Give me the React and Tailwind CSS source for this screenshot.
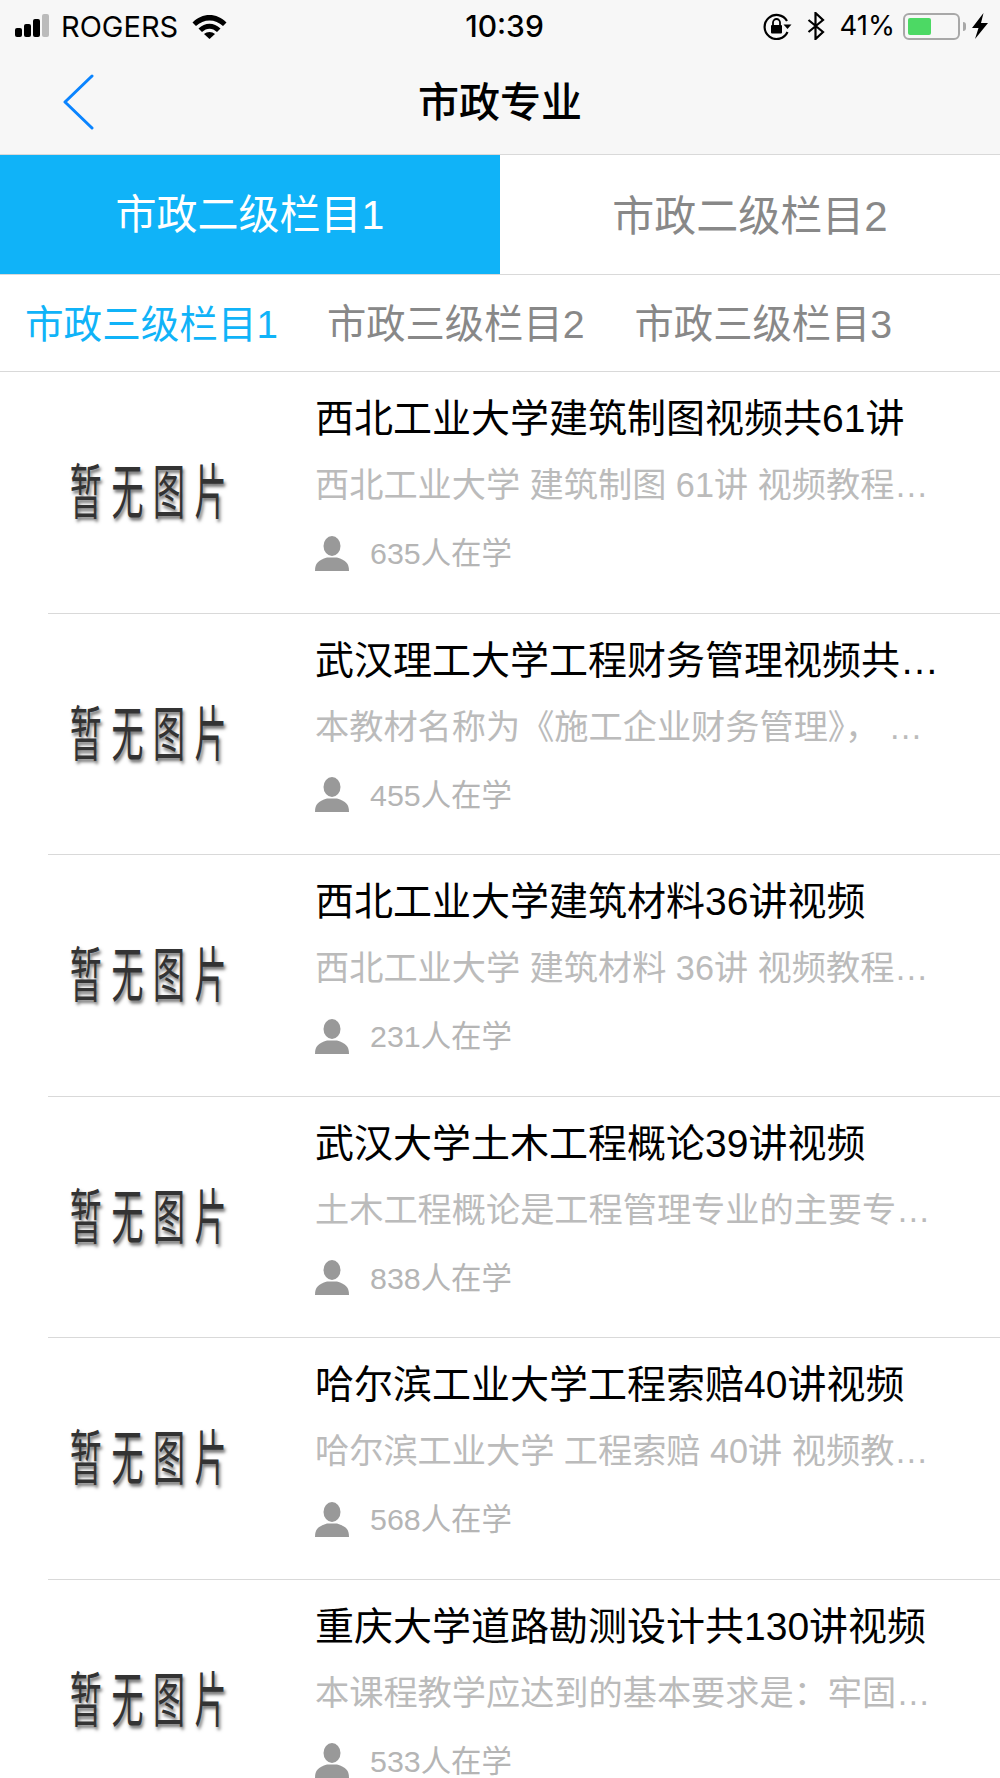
import React from 'react';

const courses = [
  { title: '西北工业大学建筑制图视频共61讲', desc: '西北工业大学 建筑制图 61讲 视频教程…', count: 635 },
  { title: '武汉理工大学工程财务管理视频共…', desc: '本教材名称为《施工企业财务管理》， …', count: 455 },
  { title: '西北工业大学建筑材料36讲视频', desc: '西北工业大学 建筑材料 36讲 视频教程…', count: 231 },
  { title: '武汉大学土木工程概论39讲视频', desc: '土木工程概论是工程管理专业的主要专…', count: 838 },
  { title: '哈尔滨工业大学工程索赔40讲视频', desc: '哈尔滨工业大学 工程索赔 40讲 视频教…', count: 568 },
  { title: '重庆大学道路勘测设计共130讲视频', desc: '本课程教学应达到的基本要求是：牢固…', count: 533 },
];

const StatusBar = () => (
  <div className="h-[52px] flex items-center justify-between pl-[15px] pr-[12px] font-['Inter','Liberation_Sans',sans-serif] text-black">
    <div className="flex items-center w-[306px]">
      <div className="flex items-end gap-[2px] h-[23px] mt-[-1px]">
        <div className="w-[7px] h-[9px] rounded-[2px] bg-black" />
        <div className="w-[7px] h-[13px] rounded-[2px] bg-black" />
        <div className="w-[7px] h-[18px] rounded-[2px] bg-black" />
        <div className="w-[7px] h-[23px] rounded-[2px] bg-[#bbbbbb]" />
      </div>
      <span className="ml-[12px] text-[29px] leading-none">ROGERS</span>
      <svg className="ml-[14px]" width="35" height="25" viewBox="0 0 35 25">
        <path d="M0.5 8.5 C10 -1.5 25 -1.5 34.5 8.5 L31 12 C23.5 4.5 11.5 4.5 4 12 Z" fill="#000" />
        <path d="M6.5 14.5 C13 8 22 8 28.5 14.5 L25 18 C20.5 13.5 14.5 13.5 10 18 Z" fill="#000" />
        <path d="M12 20 C15 17.2 20 17.2 23 20 L17.5 25 Z" fill="#000" />
      </svg>
    </div>
    <div className="text-[30px] font-medium leading-none">10:39</div>
    <div className="flex items-center justify-end w-[300px]">
      <svg width="29" height="27" viewBox="0 0 29 27" fill="none">
        <path d="M24 8 A12 12 0 1 0 24.5 19" stroke="#000" strokeWidth="2.2" />
        <path d="M20.5 11.5 L28.5 11.5 L24.5 16 Z" fill="#000" />
        <rect x="8" y="12" width="11" height="8.5" rx="1" fill="#000" />
        <path d="M10 12 V9.5 A3.5 3.5 0 0 1 17 9.5 V12" stroke="#000" strokeWidth="1.8" />
      </svg>
      <svg className="ml-[14px]" width="20" height="28" viewBox="0 0 18 28" fill="none">
        <path d="M1.5 8 L16 20 L8.5 27 V1 L16 8 L1.5 20" stroke="#000" strokeWidth="2.2" />
      </svg>
      <span className="ml-[14px] text-[27.5px] leading-none">41%</span>
      <div className="ml-[8px] w-[57px] h-[27px] rounded-[6px] border-2 border-[#a8a8a8] p-[3px]">
        <div className="w-[23px] h-full rounded-[2px] bg-[#4cd964]" />
      </div>
      <div className="ml-[3px] w-[3px] h-[9px] rounded-r-[3px] bg-[#a8a8a8]" />
      <svg className="ml-[6px]" width="16" height="26" viewBox="0 0 16 26">
        <path d="M11.5 0 L0 15 H6.5 L3 26 L16 10 H9 Z" fill="#000" />
      </svg>
    </div>
  </div>
);

const NoImage = () => (
  <div className="w-[296px] shrink-0 flex items-center justify-center pl-[10px] pb-[8px]">
    <span className="inline-block scale-x-[0.8] scale-y-[1.5] whitespace-nowrap text-[40px] leading-none font-normal tracking-[12px] text-[#333333] font-['Noto_Sans_CJK_SC',sans-serif] [text-shadow:2px_2px_3px_rgba(0,0,0,0.55)]">
      暂无图片
    </span>
  </div>
);

const UserIcon = () => (
  <svg width="34" height="35" viewBox="0 0 34 35">
    <ellipse cx="17" cy="10" rx="8.5" ry="10" fill="#999999" />
    <path d="M0 35 C0 27 3 24.5 12 21.5 H22 C31 24.5 34 27 34 35 Z" fill="#999999" />
  </svg>
);

const CourseRow = ({ course }) => (
  <div className="h-[241.5px] shrink-0 ml-[48px] flex border-b border-[#d9d9d9]">
    <div className="ml-[-48px] flex">
      <NoImage />
    </div>
    <div className="w-[640px] ml-[19px] pt-[23px]">
      <div className="whitespace-nowrap text-[39px] leading-[48px] text-black">{course.title}</div>
      <div className="mt-[22px] whitespace-nowrap text-[34.2px] leading-[40px] text-[#bbbbbb]">{course.desc}</div>
      <div className="mt-[30px] flex items-center">
        <UserIcon />
        <span className="ml-[21px] text-[30.4px] leading-[36px] text-[#b5b5b5]">{course.count}人在学</span>
      </div>
    </div>
  </div>
);

const App = () => {
  return (
    <div className="w-[1000px] h-[1778px] overflow-hidden bg-white font-['Liberation_Sans','Noto_Sans_CJK_SC',sans-serif]">
      <div className="h-[155px] bg-[#f7f7f7] border-b border-[#d9d9d9]">
        <StatusBar />
        <div className="relative h-[102px] flex items-center justify-center">
          <svg className="absolute left-[62px] top-[22px]" width="34" height="56" viewBox="0 0 34 56" fill="none">
            <path d="M30 2 L3 28 L30 54" stroke="#0a84ff" strokeWidth="3" strokeLinecap="round" strokeLinejoin="round" />
          </svg>
          <h1 className="text-[41px] font-medium leading-none text-black">市政专业</h1>
        </div>
      </div>

      <div className="flex h-[120px] border-b border-[#d9d9d9]">
        <div className="w-1/2 flex items-center justify-center pt-[3px] bg-[#10b3f8] text-[41px] text-white">市政二级栏目1</div>
        <div className="w-1/2 flex items-center justify-center pt-[3px] text-[42px] text-[#888888]">市政二级栏目2</div>
      </div>

      <div className="flex items-center h-[97px] pl-[25px] pt-[3px] border-b border-[#d9d9d9] text-[38.6px] text-[#888888]">
        <span className="text-[#10b3f8]">市政三级栏目1</span>
        <span className="ml-[49px] text-[39.3px]">市政三级栏目2</span>
        <span className="ml-[50px] text-[39.3px]">市政三级栏目3</span>
      </div>

      <div className="flex flex-col">
        {courses.map((course) => (
          <CourseRow key={course.count} course={course} />
        ))}
      </div>
    </div>
  );
};

export default App;
